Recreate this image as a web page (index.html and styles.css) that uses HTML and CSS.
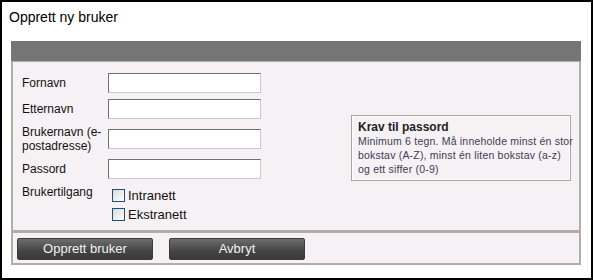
FILE: index.html
```html
<!DOCTYPE html>
<html lang="no">
<head>
<meta charset="utf-8">
<title>Opprett ny bruker</title>
<link rel="stylesheet" href="styles.css">
</head>
<body>
<div class="frame">
  <h1 class="title">Opprett ny bruker</h1>
  <div class="panel">
    <div class="panel-head"></div>
    <div class="panel-body">
      <div class="form">
        <div class="row"><label class="lbl" for="f1">Fornavn</label><input class="txt" id="f1" type="text"></div>
        <div class="row"><label class="lbl" for="f2">Etternavn</label><input class="txt" id="f2" type="text"></div>
        <div class="row"><label class="lbl" for="f3">Brukernavn (e-postadresse)</label><input class="txt" id="f3" type="text"></div>
        <div class="row"><label class="lbl" for="f4">Passord</label><input class="txt" id="f4" type="password"></div>
        <div class="row access">
          <span class="lbl">Brukertilgang</span>
          <div class="checks">
            <label class="check"><input class="cb" type="checkbox">Intranett</label>
            <label class="check"><input class="cb" type="checkbox">Ekstranett</label>
          </div>
        </div>
      </div>
      <div class="req">
        <div class="req-title">Krav til passord</div>
        <div class="req-text">Minimum 6 tegn. Må inneholde minst én stor<br>bokstav (A-Z), minst én liten bokstav (a-z)<br>og ett siffer (0-9)</div>
      </div>
    </div>
    <div class="panel-foot">
      <button class="btn" type="button">Opprett bruker</button>
      <button class="btn" type="button">Avbryt</button>
    </div>
  </div>
</div>
</body>
</html>
```
FILE: styles.css
```css
* { box-sizing: border-box; }
html, body { margin: 0; padding: 0; background: #fff; }
body { font-family: "Liberation Sans", Arial, sans-serif; }

.frame {
  width: 593px;
  height: 280px;
  border: 2px solid #000;
  padding: 7px 0 0 0;
}

.title {
  margin: 0 0 16px 7px;
  font-size: 14px;
  line-height: 16px;
  font-weight: normal;
  color: #000;
}

.panel {
  margin-left: 9px;
  width: 570px;
}

.panel-head {
  height: 20px;
  background: #757575;
}

.panel-body {
  display: flex;
  align-items: center;
  background: #f6f1f4;
  border: 2px solid #b3aca7;
  border-top: 1px solid #b3aca7;
  height: 171px;
  padding: 0 8px 0 9px;
}

.form {
  display: flex;
  flex-direction: column;
  gap: 6px;
  align-self: flex-start;
  padding-top: 11px;
}

.row {
  display: flex;
  align-items: center;
}

.lbl {
  width: 86px;
  font-size: 12px;
  line-height: 14px;
  color: #111;
  padding-right: 2px;
}

.txt {
  width: 153px;
  height: 20px;
  margin: 0;
  padding: 0 3px;
  background: #fff;
  border: 1px solid;
  border-color: #707070 #c9c9c9 #c9c9c9 #707070;
  font: 12px "Liberation Sans", Arial, sans-serif;
}

.access {
  align-items: flex-start;
}

.checks {
  display: flex;
  flex-direction: column;
  gap: 6px;
  padding-top: 4px;
  padding-left: 4px;
}

.check {
  display: flex;
  align-items: center;
  font-size: 13px;
  line-height: 13px;
  color: #111;
}

.cb {
  appearance: none;
  -webkit-appearance: none;
  width: 13px;
  height: 13px;
  margin: 0 3px 0 0;
  border: 1px solid #1d4f7c;
  background: linear-gradient(135deg, #d9d9d9, #f4f4f4 70%, #fff);
}

.req {
  margin-left: auto;
  width: 220px;
  border: 1px solid #ada69f;
  box-shadow: inset 0 0 0 1px #fff;
  padding: 4px 2px 4px 6px;
  font-size: 10.5px;
  letter-spacing: 0.2px;
  line-height: 14px;
  margin-top: 3px;
  white-space: nowrap;
}

.req-title {
  font-weight: bold;
  font-size: 12px;
  letter-spacing: 0;
  color: #222;
}

.req-text {
  color: #3c3c52;
}

.panel-foot {
  display: flex;
  gap: 16px;
  background: #f6f1f4;
  border: 2px solid #b3aca7;
  border-top: 1px solid #b3aca7;
  height: 33px;
  padding: 5px 0 0 4px;
}

.btn {
  width: 136px;
  height: 22px;
  margin: 0;
  padding: 0;
  border: 1px solid #3a3a3a;
  border-radius: 2px;
  background: linear-gradient(#6e6e6e, #444 60%, #3a3a3a);
  color: #f2f2f2;
  font: 13px/20px "Liberation Sans", Arial, sans-serif;
  text-align: center;
}
```
